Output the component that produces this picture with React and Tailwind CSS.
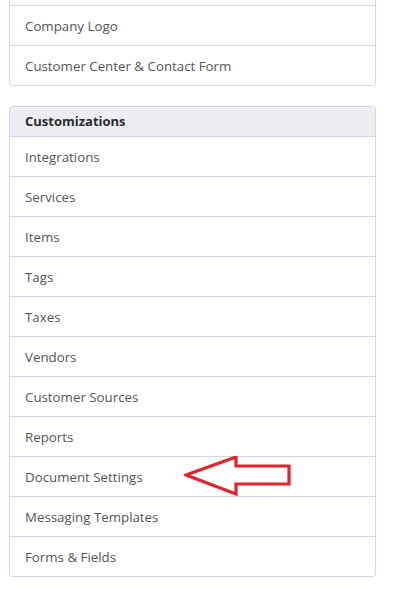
import React from "react";

const top = ["Company Logo", "Customer Center & Contact Form"];
const items = [
  "Integrations",
  "Services",
  "Items",
  "Tags",
  "Taxes",
  "Vendors",
  "Customer Sources",
  "Reports",
  "Document Settings",
  "Messaging Templates",
  "Forms & Fields",
];

function Row({ label, children }) {
  return (
    <div className="relative h-10 flex items-center px-[15px] pt-[2px] border-t border-[#d3d6e6] text-[13.3px] text-[#555]">
      {label}
      {children}
    </div>
  );
}

export default function App() {
  return (
    <div
      className="w-[398px] h-[589px] overflow-hidden bg-white px-[9px]"
      style={{ fontFamily: "'Open Sans', 'Noto Sans', sans-serif" }}
    >
      <div className="w-[367px] -mt-[36px] border border-[#d3d6e6] rounded-b-[3px] [&>div:first-child]:border-t-0">
        <Row label="" />
        {top.map((t) => (
          <Row key={t} label={t} />
        ))}
      </div>

      <div className="w-[367px] mt-5 border border-[#d3d6e6] rounded-[3px] overflow-visible">
        <div className="h-[29px] flex items-center px-[15px] pt-[1px] bg-[#eceef4] text-[13px] font-bold text-[#2b2b2b]">
          Customizations
        </div>
        {items.map((t) => (
          <Row key={t} label={t}>
            {t === "Document Settings" && (
              <svg
                className="absolute left-[174px] top-[-1px]"
                width="112"
                height="42"
                viewBox="0 0 112 42"
              >
                <path
                  d="M2 19 L52 1 L52 10 L105 10 L105 28 L52 28 L52 38 Z"
                  fill="none"
                  stroke="#e3232b"
                  strokeWidth="3.2"
                  strokeLinejoin="miter"
                />
              </svg>
            )}
          </Row>
        ))}
      </div>
    </div>
  );
}
